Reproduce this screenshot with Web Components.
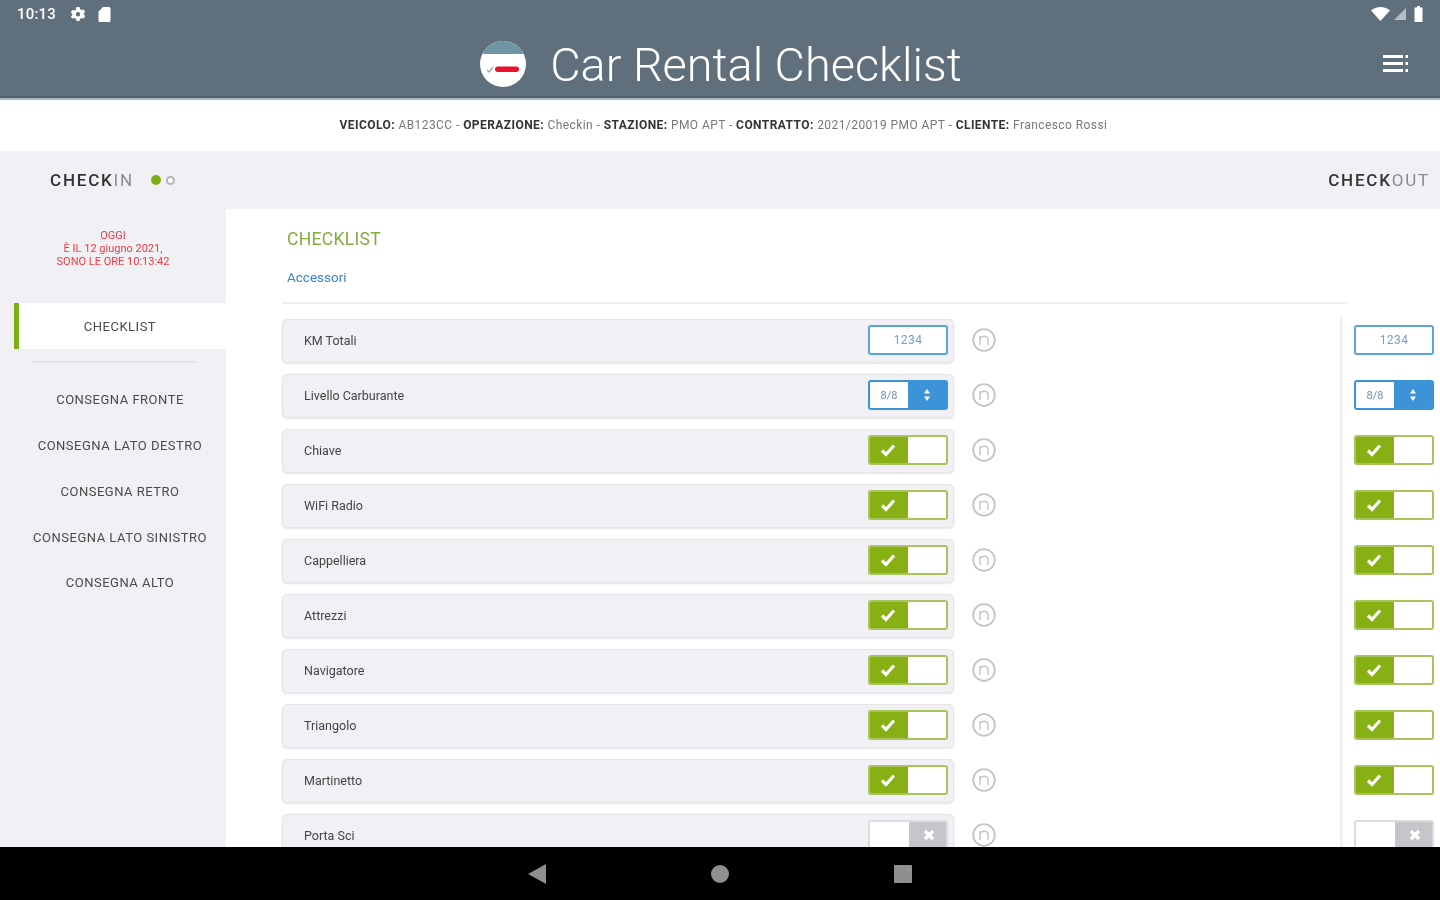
<!DOCTYPE html>
<html lang="it">
<head>
<meta charset="utf-8">
<title>Car Rental Checklist</title>
<style>
  html, body { margin: 0; height: 100%; overflow: hidden; background: #fff; }
  body { font-family: Roboto, "Liberation Sans", sans-serif; color: #444; }
  app-shell { height: 900px; filter: blur(.7px); }
</style>
</head>
<body>
<app-shell>
  <top-bar slot="top"></top-bar>
  <info-bar slot="top">
    <b>VEICOLO:</b> AB123CC - <b>OPERAZIONE:</b> Checkin - <b>STAZIONE:</b> PMO APT - <b>CONTRATTO:</b> 2021/20019 PMO APT - <b>CLIENTE:</b> Francesco Rossi
  </info-bar>
  <phase-bar slot="top"></phase-bar>
  <side-menu slot="side">
    <menu-item active>CHECKLIST</menu-item>
    <menu-item>CONSEGNA FRONTE</menu-item>
    <menu-item>CONSEGNA LATO DESTRO</menu-item>
    <menu-item>CONSEGNA RETRO</menu-item>
    <menu-item>CONSEGNA LATO SINISTRO</menu-item>
    <menu-item>CONSEGNA ALTO</menu-item>
  </side-menu>
  <check-panel slot="main"></check-panel>
  <nav-bar slot="bottom"></nav-bar>
</app-shell>

<script>
// voci della checklist: tipo di controllo + stato
const checklistRows = [
    { label: 'KM Totali', type: 'text', value: '1234' },
    { label: 'Livello Carburante', type: 'select', value: '8/8' },
    { label: 'Chiave', type: 'toggle', on: true },
    { label: 'WiFi Radio', type: 'toggle', on: true },
    { label: 'Cappelliera', type: 'toggle', on: true },
    { label: 'Attrezzi', type: 'toggle', on: true },
    { label: 'Navigatore', type: 'toggle', on: true },
    { label: 'Triangolo', type: 'toggle', on: true },
    { label: 'Martinetto', type: 'toggle', on: true },
    { label: 'Porta Sci', type: 'toggle', on: false }
];

function define(name, html, setup) {
    customElements.define(name, class extends HTMLElement {
        constructor() {
            super();
            this.attachShadow({ mode: 'open' }).innerHTML = html;
        }
        connectedCallback() {
            if (setup) setup(this);
        }
    });
}

define('app-shell', `
    <style>
        :host { display: flex; flex-direction: column; width: 1440px; overflow: hidden; }
        .body { flex: 1; min-height: 0; display: flex; overflow: hidden; }
        .side { flex: 0 0 226px; background: #f1f1f5; }
        .main { flex: 1; min-width: 0; background: #fff; overflow: hidden; }
    </style>
    <slot name="top"></slot>
    <div class="body">
        <div class="side"><slot name="side"></slot></div>
        <div class="main"><slot name="main"></slot></div>
    </div>
    <slot name="bottom"></slot>
`);

define('top-bar', `
    <style>
        :host { display: block; height: 98px; background: #5f6f7b; border-bottom: 2px solid #a5b6c0; box-sizing: content-box; color: #fff; box-shadow: inset 0 -2px 0 #52616c; }
        .status { height: 28px; display: flex; align-items: center; padding: 0 16px 0 17px; font-size: 15px; font-weight: 500; letter-spacing: .2px; }
        .status .gear { margin-left: 14px; }
        .status .card { margin-left: 12px; }
        .status .right { margin-left: auto; display: flex; align-items: center; gap: 4px; }
        .head { height: 70px; display: flex; align-items: center; justify-content: center; position: relative; }
        .brand { display: flex; align-items: center; gap: 24px; margin-left: 2px; margin-top: 4px; }
        .brand svg { margin-bottom: 2px; }
        h1 { margin: 0; font-size: 46.800px; font-weight: 300; line-height: 70px; white-space: nowrap; }
        .menu { position: absolute; right: 32px; top: 27px; }
        svg { display: block; }
    </style>
    <div class="status">
        <span class="time">10:13</span>
        <svg class="gear" width="16" height="16" viewBox="0 0 16 16"><path fill="#fff" fill-rule="evenodd" d="M6.500 1h3l.5 2 1.700 1 2-.6 1.500 2.600-1.500 1.400v1.200l1.500 1.400-1.500 2.600-2-.6-1.700 1-.5 2h-3l-.5-2-1.700-1-2 .6L.8 10.600l1.500-1.400V8L.8 6.600 2.300 4l2 .6L6 3.600zM8 6a2.200 2.200 0 1 0 0 4.400A2.200 2.200 0 0 0 8 6z"/></svg>
        <svg class="card" width="13" height="16" viewBox="0 0 13 16"><path fill="#fff" d="M5 1h6a1.500 1.500 0 0 1 1.500 1.500v12A1.500 1.500 0 0 1 11 16H2a1.500 1.500 0 0 1-1.500-1.500V5.500z"/></svg>
        <div class="right">
            <svg width="19" height="14" viewBox="0 0 19 14"><path fill="#fff" d="M0 3.500C2.500 1.300 5.800 0 9.500 0S16.500 1.300 19 3.500L9.500 14z"/></svg>
            <svg width="12" height="12" viewBox="0 0 12 12"><path fill="#fff" opacity=".55" d="M12 0v12H0z"/></svg>
            <svg width="10" height="16" viewBox="0 0 10 16" style="margin-left:4px"><path fill="#fff" d="M3 0h3v1.500h2.500V16H.5V1.500H3z"/></svg>
        </div>
    </div>
    <div class="head">
        <div class="brand">
            <svg width="46" height="46" viewBox="0 0 46 46">
                <circle cx="23" cy="23" r="23" fill="#fff"/>
                <path fill="#6f94a6" d="M4.500 9.300A23 23 0 0 1 41.500 9.300L43 13H3z"/>
                <rect x="15" y="25.500" width="24" height="5.500" rx="2.750" fill="#e8122a"/>
                <path d="M7 29l2 2 4-5" fill="none" stroke="#9aa8b0" stroke-width="1.300"/>
            </svg>
            <h1>Car Rental Checklist</h1>
        </div>
        <svg class="menu" width="25" height="17" viewBox="0 0 25 17" fill="#fff">
            <rect x="0" y="0" width="20" height="3"/><rect x="0" y="7" width="20" height="3"/><rect x="0" y="14" width="20" height="3"/>
            <rect x="22.500" y="0" width="2.500" height="3"/><rect x="22.500" y="7" width="2.500" height="3"/><rect x="22.500" y="14" width="2.500" height="3"/>
        </svg>
    </div>
`);

define('info-bar', `
    <style>
        :host { display: block; height: 51px; line-height: 51px; background: #fff; text-align: center; font-size: 12px; letter-spacing: .43px; color: #777; padding-left: 7px; box-sizing: border-box; white-space: nowrap; }
        ::slotted(b) { color: #333; font-weight: 700; }
    </style>
    <slot></slot>
`);

define('phase-bar', `
    <style>
        :host { display: flex; align-items: center; height: 58px; background: #f1f1f5; padding: 0 10px 0 50px; font-size: 17px; font-weight: 500; letter-spacing: 1.800px; color: #333; }
        span.dim { color: #8a8a8f; font-weight: 400; }
        .dots { display: flex; align-items: center; gap: 5px; margin-left: 17px; }
        .dot { width: 10px; height: 10px; border-radius: 50%; background: #7fae12; }
        .dot.off { width: 5px; height: 5px; background: #fff; border: 2px solid #b5b5ba; }
        .out { margin-left: auto; }
    </style>
    <div>CHECK<span class="dim">IN</span></div>
    <div class="dots"><div class="dot"></div><div class="dot off"></div></div>
    <div class="out">CHECK<span class="dim">OUT</span></div>
`);

define('side-menu', `
    <style>
        :host { display: block; }
        .note { width: 226px; padding-top: 20px; height: 74px; text-align: center; color: #ee3a44; font-size: 11px; line-height: 13px; white-space: nowrap; }
    </style>
    <div class="note">OGGI<br>È IL 12 giugno 2021,<br>SONO LE ORE 10:13:42</div>
    <slot></slot>
`);

define('menu-item', `
    <style>
        :host { display: flex; align-items: center; justify-content: center; height: 45.750px; margin-left: 14px; color: #4a4a4a; font-size: 13px; letter-spacing: .5px; white-space: nowrap; box-sizing: border-box; }
        :host([active]) { height: 46px; background: #fff; border-left: 5px solid #7fae12; padding: 1px 5px 0 0; margin-bottom: 28px; position: relative; }
        :host([active])::after { content: ""; position: absolute; left: 13px; top: 58px; width: 165px; height: 2px; background: #e4e4e8; }
    </style>
    <slot></slot>
`);

define('check-panel', `
    <style>
        :host { display: block; padding: 20px 0 0 56px; }
        .title { padding-left: 5px; color: #7fae3a; font-size: 17.500px; line-height: 20px; letter-spacing: .3px; }
        .tab { padding-left: 5px; margin-top: 18px; color: #3b82d6; font-size: 13.500px; line-height: 20px; }
        .rule { width: 1066px; height: 2px; margin-top: 15px; background: #f0f0f2; }
        .cols { display: flex; margin-top: 13px; }
        .left { flex: 0 0 1058px; padding-top: 2px; display: flex; flex-direction: column; gap: 11px; }
        .right { flex: 1; border-left: 3px solid #f1f1f3; padding: 2px 0 0 11px; display: flex; flex-direction: column; gap: 11px; }
        .cell { height: 44px; display: flex; align-items: center; padding-bottom: 2px; box-sizing: border-box; }
    </style>
    <div class="title">CHECKLIST</div>
    <div class="tab">Accessori</div>
    <div class="rule"></div>
    <div class="cols"><div class="left"></div><div class="right"></div></div>
`, host => {
    const left = host.shadowRoot.querySelector('.left');
    const right = host.shadowRoot.querySelector('.right');
    const controlFor = row => {
        const el = document.createElement(row.type + '-control');
        if (row.value) el.setAttribute('value', row.value);
        if (row.on) el.setAttribute('on', '');
        return el;
    };
    checklistRows.forEach(row => {
        const item = document.createElement('check-row');
        item.setAttribute('label', row.label);
        item.append(controlFor(row));
        left.append(item);

        const cell = document.createElement('div');
        cell.className = 'cell';
        cell.append(controlFor(row));
        right.append(cell);
    });
});

define('check-row', `
    <style>
        :host { display: flex; align-items: center; height: 44px; flex: none; }
        .box { width: 672px; height: 44px; box-sizing: border-box; display: flex; align-items: center; justify-content: space-between; padding: 0 5px 0 21px; background: #f1f1f5; border: 1px solid #e5e5e8; border-radius: 5px; box-shadow: 0 1px 2px rgba(0,0,0,.1); font-size: 12.500px; color: #444; }
        .label { margin-bottom: 1px; }
        ::slotted(*) { margin-top: -2px; }
        svg { margin: -2px 0 0 18px; display: block; }
    </style>
    <div class="box"><span class="label"></span><slot></slot></div>
    <svg width="24" height="24" viewBox="0 0 24 24" fill="none" stroke="#c4c4c4" stroke-width="1.800">
        <circle cx="12" cy="12" r="10.800"/>
        <path d="M8 17V8M8 10.500c1.500-3 8-3.500 8 1.500v5" stroke-width="1.400"/>
    </svg>
`, host => {
    host.shadowRoot.querySelector('.label').textContent = host.getAttribute('label');
});

const controlBox = `
    :host { display: flex; width: 80px; height: 30px; box-sizing: border-box; border-radius: 3px; overflow: hidden; background: #fff; flex: none; }
`;

define('text-control', `
    <style>
        ${controlBox}
        :host { border: 2px solid #5ba3dc; align-items: center; justify-content: center; color: #6f9fd0; font-size: 12px; letter-spacing: .4px; }
    </style>
    <span class="v"></span>
`, host => {
    host.shadowRoot.querySelector('.v').textContent = host.getAttribute('value');
});

define('select-control', `
    <style>
        ${controlBox}
        :host { border: 2px solid #3c93d8; color: #6f8fc0; font-size: 11px; }
        .v { flex: 1; display: flex; align-items: center; justify-content: center; }
        .arrows { flex: 0 0 38px; background: #3c93d8; display: flex; align-items: center; justify-content: center; }
    </style>
    <span class="v"></span>
    <span class="arrows"><svg width="6" height="12" viewBox="0 0 6 12" fill="#fff"><path d="M3 0l3 4.500H0zM3 12L0 7.500h6z"/></svg></span>
`, host => {
    host.shadowRoot.querySelector('.v').textContent = host.getAttribute('value');
});

define('toggle-control', `
    <style>
        ${controlBox}
        :host { border: 2px solid #a9c45c; }
        :host(.off) { border-color: #dcdce0; }
        .mark { flex: 0 0 40px; display: flex; align-items: center; justify-content: center; background: #86b014; margin: -2px 0 -2px -2px; }
        :host(.off) .mark { order: 2; background: #c6c6ca; margin: -2px -2px -2px 0; flex-basis: 39px; }
        .blank { flex: 1; }
    </style>
    <span class="mark"></span><span class="blank"></span>
`, host => {
    const on = host.hasAttribute('on');
    if (!on) host.classList.add('off');
    host.shadowRoot.querySelector('.mark').innerHTML = on
        ? '<svg width="16" height="14" viewBox="0 0 16 14"><path d="M2 7.500l4 4 8-9" fill="none" stroke="#fff" stroke-width="3.200"/></svg>'
        : '<svg width="12" height="12" viewBox="0 0 12 12"><path d="M2 2l8 8M10 2l-8 8" fill="none" stroke="#fff" stroke-width="3.200"/></svg>';
});

define('nav-bar', `
    <style>
        :host { display: flex; align-items: center; height: 53px; background: #000; flex: none; position: relative; z-index: 2; padding-left: 528px; }
        svg { display: block; fill: #8f8f8f; }
        .home { margin-left: 165px; }
        .recent { margin-left: 165px; }
    </style>
    <svg width="18" height="20" viewBox="0 0 18 20"><path d="M18 0v20L0 10z"/></svg>
    <svg class="home" width="18" height="18" viewBox="0 0 18 18"><circle cx="9" cy="9" r="9"/></svg>
    <svg class="recent" width="18" height="18" viewBox="0 0 18 18"><rect width="18" height="18" rx="1"/></svg>
`);
</script>
</body>
</html>
